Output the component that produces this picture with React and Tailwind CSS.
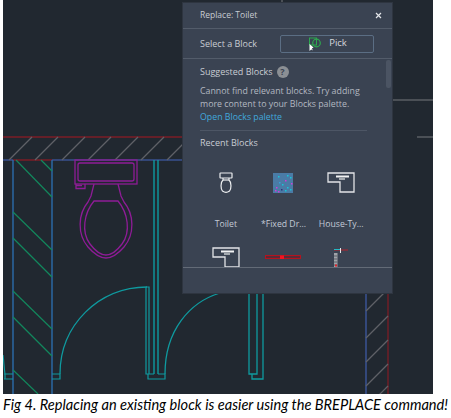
const TEAL = "#0f9a9f";
const GREEN = "#12875c";
const BLUE = "#2c6cab";
const NAVY = "#39508f";
const RED = "#7c1d26";
const GRAY = "#5f6166";
const MAGENTA = "#8e1c96";

function CadDrawing() {
  const topHatch = [0, 26, 53, 79, 106, 132, 158];
  const rightHatch = [297, 324, 348, 372, 394];
  const bandHatch = [
    "M16 160 L52 197",
    "M41 160 L52 171",
    "M13 212 L52 250",
    "M13 238 L52 277",
    "M13 291 L52 329",
    "M13 317 L52 356",
    "M13 370 L38 394",
  ];
  return (
    <svg width="430" height="394" viewBox="0 0 430 394" className="block" fill="none">
      <g transform="translate(-3 0)">
        <path d="M3 137 H182" stroke={RED} strokeWidth="1.3" />
        <path d="M13 160 H52" stroke={RED} strokeWidth="1.5" />
        <path d="M52 160 H182 M3 160 H13" stroke={NAVY} strokeWidth="1.3" />
        {topHatch.map((x) => (
          <path key={x} d={`M${x + 9} 160 L${x + 32} 137`} stroke={GRAY} strokeWidth="1.2" />
        ))}
        <path d="M13 160 V394 M52 160 V394" stroke={BLUE} strokeWidth="1.4" />
        {bandHatch.map((d) => (
          <path key={d} d={d} stroke={GREEN} strokeWidth="1.2" />
        ))}

        {/* toilet */}
        <g stroke={MAGENTA} strokeWidth="1.3">
          <rect x="75" y="160" width="62" height="24" />
          <rect x="78" y="163" width="56" height="18" rx="2" />
          <path d="M76 184 V188.500 H85 V184 M76 185.500 H82" />
          <path d="M94 184 L91 196 L88 202 C78 214 77 234 88 247 C95 255 102 258 106 258 C110 258 117 255 124 247 C135 234 134 214 124 202 L121 196 L118 184" />
          <path d="M94 201 H118 C128 213 131 232 122 244 C116 252 110 255 106 255 C102 255 96 252 90 244 C81 232 84 213 94 201 Z" />
        </g>

        {/* doors */}
        <g stroke={TEAL}>
          <path d="M154 160 V374 M158 160 V374" strokeWidth="1.4" />
          <path d="M60 374 C60 325 99 287 147 287" strokeWidth="1.3" />
          <path d="M146 287 H149 V374 M146 287 V374 H154" strokeWidth="1.2" />
          <path d="M4 374 H13 M4 379 H13 M52 374 H60 V379 H52 M148 374 V379 H165 V374 H158" strokeWidth="1.2" />
          <path d="M3 355 C4 362 4 368 5 374 V379" strokeWidth="1.2" />
          <path d="M165 374 C165 330 190 302 220 293" strokeWidth="1.3" />
          <path d="M249 293 V374 H257 V293 M252 374 V379 H263 V293" strokeWidth="1.3" />
        </g>

        {/* right wall */}
        <path d="M366 293 V394" stroke={NAVY} strokeWidth="1.6" />
        <path d="M388 293 V394" stroke={RED} strokeWidth="1.3" />
        {rightHatch.map((y) => (
          <path key={y} d={`M366 ${y + 14} L388 ${y - 8}`} stroke={GRAY} strokeWidth="1.2" />
        ))}
        <path d="M393 100 H433" stroke="#77797d" />
        <path d="M417 137 H433" stroke="#77797d" />
        <path d="M282 0 V2" stroke="#77797d" />
      </g>
    </svg>
  );
}

function ToiletThumb() {
  return (
    <svg width="14" height="21" viewBox="0 0 14 21" fill="none" stroke="#eceef0" strokeWidth="1.2">
      <rect x="1" y="1" width="12" height="5" rx="0.5" />
      <path d="M4 6 V8 C1.500 10 1.500 17 3.500 19 C5.500 20.500 8.500 20.500 10.500 19 C12.500 17 12.500 10 10 8 V6" />
      <path d="M4 8 H10" />
    </svg>
  );
}

function HouseThumb() {
  return (
    <svg width="28" height="21" viewBox="0 0 28 21" fill="none">
      <path d="M1 1 H27 V20 H13 V10 H1 Z" stroke="#e2e4e7" strokeWidth="1.300" />
      <path d="M9 3.500 H22 V5.500 H9 Z" fill="#f1f2f3" />
      <path d="M12 7 H18" stroke="#c9ccd0" strokeWidth="1.500" />
    </svg>
  );
}

function HatchThumb() {
  const dots = [
    [5, 3, "#16c7d8"], [14, 2, "#16c7d8"], [12, 7, "#d13bd6"], [17, 4, "#16c7d8"], [3, 14, "#d13bd6"],
    [2, 17, "#d13bd6"], [5, 18, "#d13bd6"], [9, 11, "#16c7d8"], [14, 14, "#16c7d8"], [18, 10, "#d13bd6"],
    [12, 17, "#16c7d8"], [6, 9, "#3aa0d8"], [17, 16, "#16c7d8"], [8, 16, "#2b2f77"],
  ];
  return (
    <svg width="20" height="20" viewBox="0 0 20 20">
      <rect width="20" height="20" fill="#4a7ba6" />
      {dots.map(([x, y, c]) => (
        <rect key={`${x}-${y}`} x={x} y={y} width="1.500" height="1.500" fill={c} />
      ))}
    </svg>
  );
}

function DoorThumb() {
  return (
    <svg width="36" height="5" viewBox="0 0 36 5">
      <rect x="0.500" y="0.500" width="35" height="3" fill="#5a2b38" stroke="#b3141f" />
      <rect x="15" y="0.500" width="4" height="3.500" fill="#f01420" />
    </svg>
  );
}

function StairThumb() {
  return (
    <svg width="16" height="20" viewBox="0 0 16 20" fill="none">
      <path d="M1 2 H15" stroke="#b3232c" />
      <path d="M1 1.500 H8" stroke="#25b9c4" />
      <path d="M7.500 0 V5" stroke="#e6e7e9" />
      <rect x="1" y="5" width="3.500" height="15" fill="#9fa3a8" />
      <path d="M1 8 H4.500 M1 11 H4.500 M1 14 H4.500 M1 17 H4.500" stroke="#5a5f68" />
      <rect x="2" y="16.500" width="2" height="2" fill="#e0232c" />
    </svg>
  );
}

function PickIcon() {
  return (
    <svg width="12" height="14" viewBox="0 0 12 14" fill="none">
      <rect x="0.500" y="1" width="7" height="7" stroke="#2da84f" />
      <circle cx="7.500" cy="6" r="3.800" stroke="#2da84f" strokeWidth="1.200" />
      <path d="M0.500 7 V14 L2.200 12.500 L4 13.500 L2.800 11.500 L4.500 10.500 Z" fill="#fff" />
    </svg>
  );
}

function BlockCell({ label, children }) {
  return (
    <div className="flex flex-col items-center">
      <div className="flex h-[21px] items-center">{children}</div>
      <div className="mt-[24px] h-[14px] whitespace-nowrap text-[8.700px] leading-[14px] text-[#c3cad6]">{label}</div>
    </div>
  );
}

export default function App() {
  return (
    <div className="min-h-[418px] w-[451px] overflow-hidden bg-white font-['Open_Sans',sans-serif]">
      <div className="relative ml-[3px] h-[394px] w-[430px] bg-[#212830]">
        <CadDrawing />

        {/* replace block panel */}
        <div className="absolute left-[179px] top-[2px] w-[211px] border border-[#2e3540] bg-[#3a4352] text-[9px] text-[#c8ccd3]">
          <div className="flex h-[25px] items-center justify-between pl-[17px] pr-[10px]">
            <span className="text-[8.500px]">Replace: Toilet</span>
            <svg width="7" height="7" viewBox="0 0 7 7" stroke="#e4e6ea" strokeWidth="1.200">
              <path d="M1 1 L6 6 M6 1 L1 6" />
            </svg>
          </div>
          <div className="flex h-[31px] items-center justify-between border-y border-[#535c6a] pl-[17px] pr-[18px]">
            <span>Select a Block</span>
            <div className="flex h-[18px] w-[94px] items-center justify-center gap-[8px] rounded-[2px] border border-[#5b6e84] pl-[2px] text-[#d5d8dd]">
              <PickIcon />
              <span className="text-[9.500px]">Pick</span>
            </div>
          </div>
          <div className="relative h-[208px] overflow-hidden pl-[17px] pr-[25px]">
            <div className="absolute right-[1px] top-[1px] h-[28px] w-[5px] rounded-[2px] bg-[#4b5463]" />
            <div className="mt-[5px] flex h-[16px] items-center gap-[4px]">
              <span>Suggested Blocks</span>
              <span className="flex h-[12px] w-[12px] items-center justify-center rounded-full bg-[#8b8f94] text-[9px] font-bold text-[#3a4352]">?</span>
            </div>
            <p className="mt-[5px] w-[166px] text-[8.800px] leading-[13px] text-[#b3b8c1]">
              Cannot find relevant blocks. Try adding more content to your Blocks palette.
            </p>
            <p className="text-[8.800px] leading-[13px] text-[#41a8dc]">Open Blocks palette</p>
            <div className="mt-[6px] border-t border-[#4d5665]" />
            <div className="mt-[5px] h-[14px] leading-[14px]">Recent Blocks</div>

            <div className="mt-[22px] -ml-[3px] grid w-[173px] grid-cols-3 justify-items-center">
              <BlockCell label="Toilet"><ToiletThumb /></BlockCell>
              <BlockCell label="*Fixed Dr..."><HatchThumb /></BlockCell>
              <BlockCell label="House-Ty..."><HouseThumb /></BlockCell>
            </div>
            <div className="mt-[16px] -ml-[3px] grid w-[173px] grid-cols-3 items-center justify-items-center">
              <HouseThumb />
              <DoorThumb />
              <StairThumb />
            </div>
          </div>
          <div className="h-[26px] border-t border-[#636b77]" />
        </div>
      </div>
      <p className="h-[24px] whitespace-nowrap pl-[3px] pt-[1px] font-['Lato',sans-serif] text-[14.600px] italic leading-[20px] text-black">
        Fig 4. Replacing an existing block is easier using the BREPLACE command!
      </p>
    </div>
  );
}
